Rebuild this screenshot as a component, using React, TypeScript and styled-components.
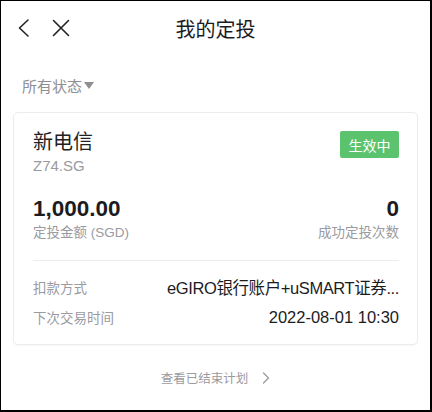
import React from 'react';
import styled, { createGlobalStyle } from 'styled-components';

const GlobalStyle = createGlobalStyle`
  html, body {
    margin: 0;
    padding: 0;
    background: #fff;
  }
  body {
    font-family: 'Liberation Sans', 'Noto Sans CJK SC', sans-serif;
  }
`;

const Frame = styled.div`
  box-sizing: border-box;
  width: 432px;
  height: 412px;
  border-style: solid;
  border-color: #000;
  border-width: 1px 2px 2px 1px;
  background: #fff;
  display: flex;
  flex-direction: column;
  overflow: hidden;
`;

const NavBar = styled.div`
  position: relative;
  height: 54px;
  display: flex;
  align-items: center;
  padding: 0 15px;
`;

const NavIcons = styled.div`
  display: flex;
  align-items: center;
  gap: 20px;

  & svg {
    display: block;
  }
`;

const Title = styled.div`
  position: absolute;
  left: 0;
  right: 0;
  top: 0;
  bottom: 0;
  display: flex;
  align-items: center;
  justify-content: center;
  font-size: 20px;
  color: #1c1c1e;
  pointer-events: none;
`;

const Filter = styled.div`
  display: flex;
  align-items: center;
  gap: 2px;
  padding: 19px 21px 0;
  height: 22px;
  font-size: 15px;
  color: #8e8e93;
`;

const Caret = styled.span`
  width: 0;
  height: 0;
  border-left: 5px solid transparent;
  border-right: 5px solid transparent;
  border-top: 7px solid #8e8e93;
  margin-top: 1px;
`;

const Card = styled.div`
  margin: 16px 12px 0;
  border: 1px solid #ececec;
  border-radius: 5px;
  padding: 15px 18px 12px 19px;
  box-shadow: 0 1px 2px rgba(0, 0, 0, 0.04);
`;

const Row = styled.div<{ $align?: string }>`
  display: flex;
  justify-content: space-between;
  align-items: ${(p) => p.$align || 'flex-start'};
`;

const Col = styled.div<{ $right?: boolean }>`
  display: flex;
  flex-direction: column;
  align-items: ${(p) => (p.$right ? 'flex-end' : 'flex-start')};
`;

const StockName = styled.div`
  font-size: 20px;
  line-height: 28px;
  color: #222;
`;

const Code = styled.div`
  font-size: 15px;
  line-height: 20px;
  color: #9a9a9f;
`;

const Badge = styled.div`
  margin-top: 3px;
  width: 59px;
  height: 27px;
  border-radius: 2px;
  background: #5bc36d;
  color: #fff;
  font-size: 14px;
  display: flex;
  align-items: center;
  justify-content: center;
`;

const Stats = styled(Row)`
  margin-top: 19px;
`;

const Big = styled.div`
  font-size: 22.5px;
  line-height: 28px;
  font-weight: 700;
  color: #1c1c1e;
`;

const Label = styled.div`
  font-size: 13.5px;
  line-height: 20px;
  color: #9a9a9f;
`;

const Divider = styled.div`
  height: 1px;
  background: #ececec;
  margin: 17px 0 11px;
`;

const Detail = styled.div`
  display: flex;
  justify-content: space-between;
  align-items: center;
  height: 30px;
  font-size: 13.5px;
`;

const DetailKey = styled.span`
  color: #9a9a9f;
`;

const DetailValue = styled.span<{ $tight?: boolean }>`
  color: #1c1c1e;
  font-size: 16.5px;
  white-space: nowrap;
  letter-spacing: ${(p) => (p.$tight ? '-0.4px' : '0')};
`;

const Footer = styled.div`
  display: flex;
  justify-content: center;
  align-items: center;
  gap: 14px;
  margin-top: 23px;
  font-size: 12.5px;
  color: #9a9a9f;
`;

function BackIcon() {
  return (
    <svg width="16" height="22" viewBox="0 0 16 22">
      <path d="M12 3 L3.5 11 L12 19" fill="none" stroke="#222" strokeWidth="1.6" strokeLinecap="round" strokeLinejoin="round" />
    </svg>
  );
}

function CloseIcon() {
  return (
    <svg width="18" height="18" viewBox="0 0 18 18">
      <path d="M1.5 1.5 L16.5 16.5 M16.5 1.5 L1.5 16.5" fill="none" stroke="#222" strokeWidth="1.6" strokeLinecap="round" />
    </svg>
  );
}

function SmallChevron() {
  return (
    <svg width="8" height="12" viewBox="0 0 8 12">
      <path d="M1.5 1 L6.5 6 L1.5 11" fill="none" stroke="#9a9a9f" strokeWidth="1.3" strokeLinecap="round" strokeLinejoin="round" />
    </svg>
  );
}

export default function App() {
  return (
    <>
      <GlobalStyle />
      <Frame>
        <NavBar>
          <NavIcons>
            <BackIcon />
            <CloseIcon />
          </NavIcons>
          <Title>我的定投</Title>
        </NavBar>
        <Filter>
          所有状态
          <Caret />
        </Filter>
        <Card>
          <Row>
            <Col>
              <StockName>新电信</StockName>
              <Code>Z74.SG</Code>
            </Col>
            <Badge>生效中</Badge>
          </Row>
          <Stats $align="flex-end">
            <Col>
              <Big>1,000.00</Big>
              <Label>定投金额 (SGD)</Label>
            </Col>
            <Col $right>
              <Big>0</Big>
              <Label>成功定投次数</Label>
            </Col>
          </Stats>
          <Divider />
          <Detail>
            <DetailKey>扣款方式</DetailKey>
            <DetailValue $tight>eGIRO银行账户+uSMART证券...</DetailValue>
          </Detail>
          <Detail>
            <DetailKey>下次交易时间</DetailKey>
            <DetailValue>2022-08-01 10:30</DetailValue>
          </Detail>
        </Card>
        <Footer>
          查看已结束计划
          <SmallChevron />
        </Footer>
      </Frame>
    </>
  );
}
